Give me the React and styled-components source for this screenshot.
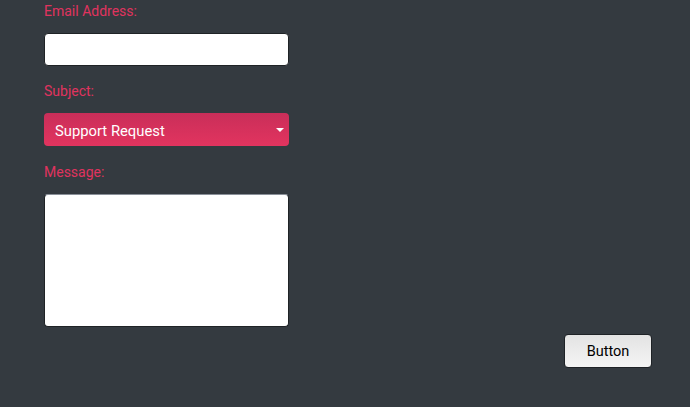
import React from 'react'
import styled, { createGlobalStyle } from 'styled-components'

const GlobalStyle = createGlobalStyle`
  html, body {
    margin: 0;
    padding: 0;
    background: #343a40;
    font-family: Roboto, "Liberation Sans", sans-serif;
  }
`

const Page = styled.div`
  box-sizing: border-box;
  width: 690px;
  height: 407px;
  padding: 0 38px 0 44px;
  display: flex;
  flex-direction: column;
`

const Form = styled.form`
  display: flex;
  flex-direction: column;
  width: 245px;
`

const Label = styled.label`
  color: #e0335f;
  font-size: 14px;
  line-height: 22px;
  height: 22px;
  margin-top: ${props => props.top || '0'};
  margin-bottom: 11px;
`

const Field = styled.input`
  box-sizing: border-box;
  width: 245px;
  height: 33px;
  margin: 0;
  border: 1px solid #1f2326;
  border-radius: 4px;
  background: #fff;
  outline: none;
`

const Select = styled.div`
  box-sizing: border-box;
  position: relative;
  display: flex;
  align-items: center;
  width: 245px;
  height: 33px;
  padding: 2px 0 0 11px;
  border-radius: 4px;
  background: linear-gradient(#c92e59, #e2345f);
  color: #fff;
  font-size: 14.8px;
`

const Caret = styled.span`
  position: absolute;
  right: 5px;
  top: 15px;
  width: 0;
  height: 0;
  border-left: 4px solid transparent;
  border-right: 4px solid transparent;
  border-top: 4px solid #fff;
`

const TextArea = styled.textarea`
  box-sizing: border-box;
  width: 245px;
  height: 133px;
  margin: 0;
  border: 1px solid #1f2326;
  border-top-color: #8a9099;
  border-radius: 4px;
  background: #fff;
  resize: none;
  outline: none;
`

const Footer = styled.div`
  display: flex;
  justify-content: flex-end;
  margin-top: 7px;
`

const Button = styled.button`
  box-sizing: border-box;
  width: 88px;
  height: 34px;
  border: 1px solid #1e2226;
  border-radius: 4px;
  background: linear-gradient(#e3e3e3, #f4f4f4);
  color: #000;
  font-family: Roboto, "Liberation Sans", sans-serif;
  font-size: 14.5px;
  padding: 0;
`

export default function App() {
  return (
    <>
      <GlobalStyle />
      <Page>
        <Form>
          <Label>Email Address:</Label>
          <Field type="text" />
          <Label top="14px">Subject:</Label>
          <Select>
            Support Request
            <Caret />
          </Select>
          <Label top="15px">Message:</Label>
          <TextArea />
        </Form>
        <Footer>
          <Button type="button">Button</Button>
        </Footer>
      </Page>
    </>
  )
}
